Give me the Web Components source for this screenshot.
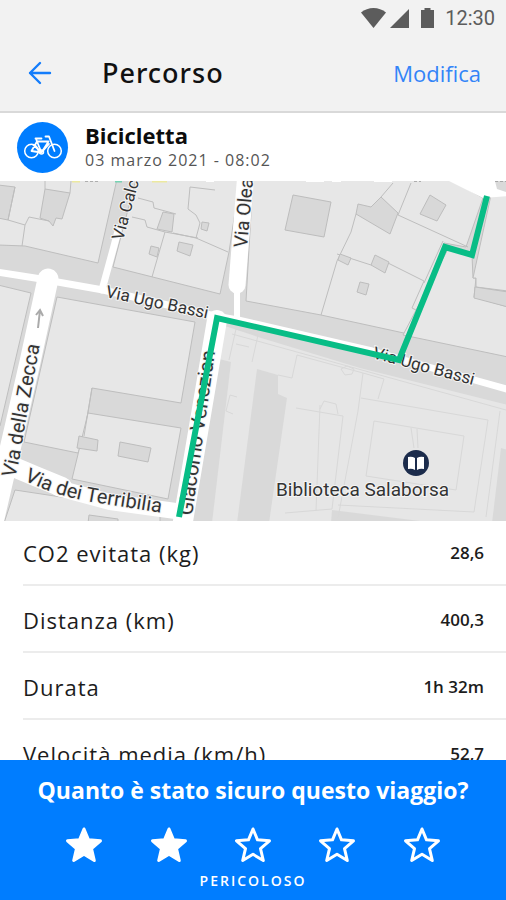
<!DOCTYPE html>
<html lang="it">
<head>
<meta charset="utf-8">
<meta name="viewport" content="width=device-width, initial-scale=1">
<title>Percorso</title>
<style>
  html, body {
    height: 100%;
    margin: 0;
  }

  body {
    --blue: #007dff;
    font-family: "Open Sans", "Noto Sans", sans-serif;
    color: #1c1c1c;
    background: #fff;
  }
</style>
</head>
<body>
<trip-page>
  <status-bar slot="top">12:30</status-bar>
  <nav-bar slot="top" action="Modifica">Percorso</nav-bar>
  <trip-header date="03 marzo 2021 - 08:02">Bicicletta</trip-header>
  <route-map></route-map>
  <stat-row value="28,6">CO2 evitata (kg)</stat-row>
  <stat-row value="400,3">Distanza (km)</stat-row>
  <stat-row value="1h 32m">Durata</stat-row>
  <stat-row value="52,7">Velocità media (km/h)</stat-row>
  <safety-rating slot="bottom" value="2">Quanto è stato sicuro questo viaggio?</safety-rating>
</trip-page>

<script>
class TripPage extends HTMLElement {
  constructor() {
    super();
    this.attachShadow({ mode: 'open' }).innerHTML = `
      <style>
        :host {
          display: flex;
          flex-direction: column;
          height: 100vh;
        }

        header {
          background: #f2f2f2;
          border-bottom: 2px solid #d9d9d9;
        }

        main {
          flex: 1;
          min-height: 0;
          overflow-y: auto;
          scrollbar-width: none;
        }
      </style>
      <header><slot name="top"></slot></header>
      <main><slot></slot></main>
      <slot name="bottom"></slot>
    `;
  }
}

class StatusBar extends HTMLElement {
  constructor() {
    super();
    this.attachShadow({ mode: 'open' }).innerHTML = `
      <style>
        :host {
          display: flex;
          justify-content: flex-end;
          align-items: center;
          height: 35px;
          padding-right: 11px;
          font: 400 20px/24px Roboto, sans-serif;
          color: #5c5c5c;
        }

        svg {
          fill: currentColor;
          margin-right: 10px;
        }
      </style>
      <svg width="75" height="22" viewBox="0 0 75 22" aria-hidden="true">
        <path d="M1 5.500C8-.500 19-.500 26 5.500L13.500 21z"/>
        <path d="M49 2v19H30z"/>
        <path d="M61 3h3.500V1h6v2H74v18H61z"/>
      </svg>
      <span><slot></slot></span>
    `;
  }
}

class NavBar extends HTMLElement {
  constructor() {
    super();
    this.attachShadow({ mode: 'open' });
  }

  connectedCallback() {
    this.shadowRoot.innerHTML = `
      <style>
        :host {
          display: flex;
          align-items: center;
          height: 76px;
          padding: 0 25px 0 28px;
        }

        button {
          display: flex;
          padding: 0;
          border: 0;
          background: none;
          font-family: inherit;
          font-size: 22px;
          line-height: 28px;
          color: #3284f8;
          cursor: pointer;
        }

        h1 {
          flex: 1;
          margin: 0 0 0 50px;
          font-family: "Noto Sans", sans-serif;
          font-size: 27px;
          line-height: 36px;
          font-weight: 500;
          letter-spacing: 1px;
          color: #111;
        }
      </style>
      <button type="button" aria-label="Indietro">
        <svg width="24" height="24" viewBox="0 0 24 24" fill="none" stroke="#147dfb" stroke-width="2.400" stroke-linecap="round" stroke-linejoin="round">
          <path d="M22 12H2M12 2 2 12l10 10"/>
        </svg>
      </button>
      <h1><slot></slot></h1>
      <button type="button">${this.getAttribute('action')}</button>
    `;
  }
}

class TripHeader extends HTMLElement {
  constructor() {
    super();
    this.attachShadow({ mode: 'open' });
  }

  connectedCallback() {
    this.shadowRoot.innerHTML = `
      <style>
        :host {
          display: flex;
          align-items: center;
          gap: 17px;
          height: 68px;
          padding: 0 17px;
        }

        .badge {
          display: flex;
          align-items: center;
          justify-content: center;
          width: 51px;
          height: 51px;
          border-radius: 50%;
          background: var(--blue);
        }

        h2 {
          margin: 0;
          font-size: 22px;
          line-height: 26px;
          font-weight: 700;
          color: #0c0c0c;
        }

        time {
          display: block;
          font-size: 16px;
          line-height: 24px;
          letter-spacing: 1px;
          color: #555;
        }
      </style>
      <span class="badge">
        <svg width="40" height="26" viewBox="0 0 40 26" fill="none" stroke="#fff" stroke-width="1.500" stroke-linecap="round" stroke-linejoin="round" aria-hidden="true">
          <circle cx="8.500" cy="17" r="6.800"/>
          <circle cx="31.500" cy="17" r="6.800"/>
          <path d="M8.500 17 14 7.500h11.500L18.500 18.500zM14 7.500l4.500 11M12.500 4.500h6M14 7.500l-1-3M31.500 17 26 2.500h-3.500M10.500 11l8 7.500 7.500-8.500" stroke-width="1.800"/>
          <circle cx="18.500" cy="18" r="2"/>
        </svg>
      </span>
      <div>
        <h2><slot></slot></h2>
        <time>${this.getAttribute('date')}</time>
      </div>
    `;
  }
}

class RouteMap extends HTMLElement {
  constructor() {
    super();
    this.attachShadow({ mode: 'open' }).innerHTML = `
      <style>
        :host {
          display: block;
        }

        svg {
          display: block;
          width: 100%;
          height: auto;
        }

        .open { fill: #d9d9d9; }
        .lot { fill: #e7e7e7; stroke: #bebebe; }
        .yard { fill: #d8d8d8; stroke: #bdbdbd; }
        .line { fill: none; stroke: #bebebe; }
        .faint { fill: none; stroke: #d8d8d8; }
        .road { fill: none; stroke: #fff; stroke-linecap: round; stroke-linejoin: round; }
        .route { fill: none; stroke: #08bd86; stroke-width: 6; }

        text {
          font: 400 20px Roboto, sans-serif;
          fill: #333;
          stroke: #f4f4f4;
          stroke-width: 2px;
          paint-order: stroke;
        }

        .small { font-size: 17px; }
        .medium { font-size: 19px; }
      </style>
      <svg viewBox="0 0 506 340" role="img" aria-label="Mappa del percorso">
        <rect class="open" width="506" height="340"/>

        <!-- north side of Via Ugo Bassi -->
        <path class="lot" d="M-2-2H117L98 82 25 65-2 64z"/>
        <path class="lot" d="M136-2H240L229 71 220 113 113 86z"/>
        <path class="lot" d="M253-2H450L483 17 466 66 444 62 427 125 413 154 321 134 246 120z"/>
        <path class="lot" d="M448 68 472 74 473 97 476 97 474 116 508 126V176L403 154z"/>
        <path class="lot" d="M491 14H508V110L476 106V97H473z"/>
        <path class="yard" d="M-2 4 15 6 8 39-2 37z"/>
        <path class="yard" d="M45 8 70 12 62 38 56 37 53 45 49 40 40 37z"/>
        <path class="line" d="M15 6 8 39 25 44 29 36 49 40M25 44 22 65M71 0 70 12M45 8V0"/>
        <path class="line" d="M138 17 153 21 154 27 176 33M173 52 196 57 200 42 196 34 188 28 190 6 215 9M132 36 145 39 147 46 165 51 152 96M196 57 228 71M165 51 198 57"/>
        <path class="yard" d="M163 31 174 33 172 51 157 48z"/>
        <path class="yard" d="M151 65 159 67 157 76 149 73z"/>
        <path class="yard" d="M179 61 193 64 190 75 177 70z"/>
        <path class="yard" d="M202 41 209 42 207 50 201 48z"/>
        <path class="yard" d="M293 14 331 21 324 56 285 49z"/>
        <path class="yard" d="M358 23 371 26 381 16 398 32 390 53 356 33z"/>
        <path class="line" d="M356 33 351 51 337 80 321 134M337 73 371 84 388 82 424 100M381 16 393 2M398 34 411 2M398 34 468 66M424 100 412 127 420 131M443 60 424 102"/>
        <path class="yard" d="M430 14 446 24 437 40 420 33z"/>
        <path class="yard" d="M375 74 389 81 385 92 371 84z"/>
        <path class="yard" d="M340 73 351 77 348 84 338 79z"/>
        <path class="yard" d="M360 101 369 103 366 114 357 111z"/>
        <path class="yard" d="M475 106 508 111V126L474 117z"/>

        <!-- west blocks -->
        <path class="lot" d="M-2 104 31 112 0 245-2 245z"/>
        <path class="lot" d="M57 116 195 141 181 222 92 207 84 255 78 272 24 261z"/>
        <path class="lot" d="M88 232 181 247 168 318 72 298z"/>
        <path class="line" d="M92 207 84 255"/>
        <path class="lot" d="M15 309 160 331V342H4z"/>
        <path class="yard" d="M79 255 98 259 97 270 77 267z"/>
        <path class="yard" d="M120 261 151 267 148 281 118 275z"/>
        <path class="yard" d="M89 334 118 338V342H88z"/>

        <!-- Salaborsa complex -->
        <path d="M225 145 258 156 360 187 508 224V342H194L217 164z" fill="#e6e6e6"/>
        <path class="open" d="M219 178 231 181 212 342H192z"/>
        <path class="open" d="M257 188 278 194V213L287 217 269 342H237z"/>
        <path class="open" d="M501 267 508 269V342H492z"/>
        <path class="open" d="M332 329 420 340V342H331z"/>
        <path class="faint" d="M232 153 506 229M229 179 236 148 258 154 252 181M236 163 249 166M278 194 292 197 297 174 363 192 358 230 338 337M363 192 384 198 378 218M361 217 488 239 474 331 338 324M374 240 464 255 456 309 366 295zM296 227 343 235 332 328 285 332M320 224 316 330M341 188 347 185 354 188 352 193 345 194zM320 228 324 220 336 223 338 233M411 247 414 267M417 248 418 267M500 230 486 336M237 216 230 214 226 230 233 233"/>

        <!-- streets -->
        <path d="M449 0H508V15L483 17z" fill="#fff"/>
        <path d="M495 0H506V11L497 8z" fill="#d9d9d9"/>
        <path class="road" stroke-width="7" d="M-3 91 35 97 103 109 215 135 238 139 372 170 478 200 510 209"/>
        <path class="road" stroke-width="7" d="M102 109 114 65 118 50"/>
        <path class="road" stroke-width="6" d="M237 139V100"/>
        <path class="road" stroke-width="17" d="M237 104 246-9"/>
        <path class="road" stroke-width="21" d="M48 98 30 181 11 264-9 350"/>
        <path class="road" stroke-width="20" d="M9 284 35 295 62 306"/>
        <path class="road" stroke-width="16" d="M58 307 110 321 183 331"/>
        <path class="road" stroke-width="20" d="M217 139 181 352"/>
        <path d="M38 147 40 129M36 134 40 129 43 135" fill="none" stroke="#aaa" stroke-width="2"/>
        <path d="M72 0H80" stroke="#ece9a0" stroke-width="3"/>
        <path d="M152 0H167" stroke="#ece9a0" stroke-width="3"/>
        <path d="M115 0H122" stroke="#76d3b3" stroke-width="3"/>
        <path d="M85 0H99M414 0H421M495 0H506" stroke="#777" stroke-dasharray="3 2"/>
        <path d="M206 0H214M306 0H324M332 0H341M374 0H392" stroke="#fff" stroke-width="2"/>

        <path id="terribilia" d="M24 299Q52 314 92 321L175 334" fill="none"/>
        <path id="zecca" d="M15 297Q20 278 24 250L46 130" fill="none"/>
        <text class="small" transform="translate(123 60) rotate(-75)">Via Calc</text>
        <text class="medium" transform="translate(247 67) rotate(-85)">Via Olea</text>
        <text class="small" transform="translate(105 116) rotate(12)">Via Ugo Bassi</text>
        <text class="small" transform="translate(372 177) rotate(15)">Via Ugo Bassi</text>
        <text transform="translate(192 335) rotate(-82)">Giacomo Venezian</text>
        <text><textPath href="#terribilia">Via dei Terribilia</textPath></text>
        <text><textPath href="#zecca">Via della Zecca</textPath></text>
        <text class="medium" x="276" y="315">Biblioteca Salaborsa</text>

        <path class="route" d="M179 336 217 137 399 179 445 66 472 74 487 15"/>

        <circle cx="416" cy="282" r="13" fill="#1c2c4c"/>
        <path d="M415 277Q412 275 408 276V288Q412 287 415 289zM417 277Q420 275 424 276V288Q420 287 417 289z" fill="#fff"/>
      </svg>
    `;
  }
}

class StatRow extends HTMLElement {
  constructor() {
    super();
    this.attachShadow({ mode: 'open' });
  }

  connectedCallback() {
    this.shadowRoot.innerHTML = `
      <style>
        :host {
          display: block;
          padding-left: 23px;
        }

        dl {
          display: flex;
          align-items: center;
          justify-content: space-between;
          margin: 0;
          padding: 19px 22px 16px 0;
          border-bottom: 2px solid #ececec;
        }

        :host(:first-of-type) dl {
          padding-top: 17px;
        }

        dt {
          font-size: 22px;
          line-height: 30px;
          letter-spacing: 1px;
        }

        dd {
          margin: 0;
          font-size: 17px;
          line-height: 30px;
          font-weight: 600;
        }
      </style>
      <dl>
        <dt><slot></slot></dt>
        <dd>${this.getAttribute('value')}</dd>
      </dl>
    `;
  }
}

class SafetyRating extends HTMLElement {
  constructor() {
    super();
    this.attachShadow({ mode: 'open' });
    this.names = ['Molto pericoloso', 'Pericoloso', 'Accettabile', 'Sicuro', 'Molto sicuro'];
  }

  connectedCallback() {
    const value = Number(this.getAttribute('value'));
    const stars = this.names.map((name, i) => `
      <label>
        <input type="radio" name="rating" value="${i + 1}" aria-label="${name}" ${i + 1 === value ? 'checked' : ''}>
        <svg width="38" height="38" viewBox="0 0 38 38" aria-hidden="true">
          <path d="M19 3 23.500 13.800 35.500 14.800 26.500 22.600 29.300 34.500 19 28.300 8.700 34.500 11.500 22.600 2.500 14.800 14.500 13.800z"/>
        </svg>
      </label>
    `).join('');

    this.shadowRoot.innerHTML = `
      <style>
        :host {
          display: block;
          color: #fff;
          background: var(--blue);
          text-align: center;
        }

        fieldset {
          margin: 0;
          padding: 14px 42px 9px;
          border: 0;
        }

        h3 {
          margin: 0 -30px 20px;
          font-size: 23px;
          line-height: 32px;
          font-weight: 700;
        }

        .stars {
          display: flex;
          margin-bottom: 7px;
        }

        label {
          display: flex;
          flex: 1;
          justify-content: center;
          cursor: pointer;
        }

        input {
          appearance: none;
          width: 0;
          height: 0;
          margin: 0;
        }

        path {
          fill: none;
          stroke: #fff;
          stroke-width: 3;
          stroke-linejoin: round;
        }

        .on path {
          fill: #fff;
        }

        output {
          display: block;
          font-size: 14px;
          line-height: 20px;
          font-weight: 600;
          letter-spacing: 2px;
        }
      </style>
      <fieldset aria-labelledby="question">
        <h3 id="question"><slot></slot></h3>
        <div class="stars">${stars}</div>
        <output></output>
      </fieldset>
    `;
    this.shadowRoot.querySelector('.stars').addEventListener('change', (e) => this.update(Number(e.target.value)));
    this.update(value);
  }

  update(value) {
    this.shadowRoot.querySelectorAll('label').forEach((label, i) => {
      label.classList.toggle('on', i < value);
    });
    this.shadowRoot.querySelector('output').textContent = this.names[value - 1].toUpperCase();
  }
}

customElements.define('trip-page', TripPage);
customElements.define('status-bar', StatusBar);
customElements.define('nav-bar', NavBar);
customElements.define('trip-header', TripHeader);
customElements.define('route-map', RouteMap);
customElements.define('stat-row', StatRow);
customElements.define('safety-rating', SafetyRating);
</script>
</body>
</html>
